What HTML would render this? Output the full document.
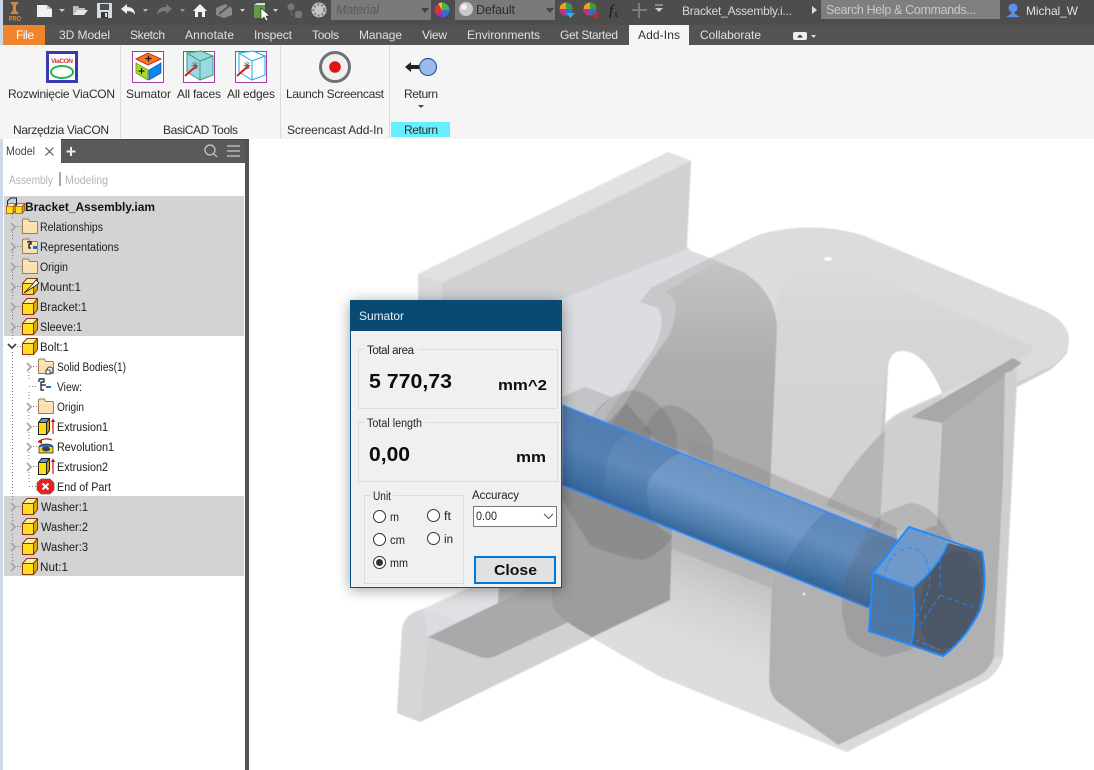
<!DOCTYPE html>
<html><head><meta charset="utf-8"><title>Sumator</title>
<style>html,body{margin:0;padding:0;background:#fff;overflow:hidden}svg{display:block}
text{font-family:"Liberation Sans",sans-serif;font-size:12px;white-space:pre}
.t{fill:#e0e0e0;font-size:12px}.r{fill:#2e2e2e;font-size:12px}.n{fill:#1c1c1c;font-size:11.5px}.d{fill:#222;font-size:11.5px}</style></head>
<body>
<svg xmlns="http://www.w3.org/2000/svg" width="1094" height="770" viewBox="0 0 1094 770">
<defs>
<linearGradient id="bolt" gradientUnits="userSpaceOnUse" x1="740" y1="477" x2="713" y2="546"><stop offset="0" stop-color="#6a93c3"/><stop offset=".42" stop-color="#739bc9"/><stop offset=".8" stop-color="#4d7cae"/><stop offset="1" stop-color="#376497"/></linearGradient>
<linearGradient id="wall" x1="0" y1="0" x2="0" y2="1"><stop offset="0" stop-color="#c3c4c6"/><stop offset=".45" stop-color="#adadaf"/><stop offset="1" stop-color="#a9a9ab"/></linearGradient>
<linearGradient id="cen" x1="0" y1="0" x2="0" y2="1"><stop offset="0" stop-color="#dcdcde"/><stop offset=".3" stop-color="#d5d5d7"/><stop offset="1" stop-color="#d2d2d4"/></linearGradient>
<linearGradient id="under" gradientUnits="userSpaceOnUse" x1="735" y1="560" x2="700" y2="650"><stop offset="0" stop-color="#bdbdbf"/><stop offset=".5" stop-color="#d2d2d4"/><stop offset="1" stop-color="#dddddd"/></linearGradient>
<filter id="sh" x="-20%" y="-20%" width="140%" height="140%"><feGaussianBlur stdDeviation="7"/></filter>
<filter id="soft" x="0" y="0" width="100%" height="100%"><feGaussianBlur stdDeviation=".5"/></filter>
<symbol id="cube" viewBox="0 0 16 17" width="16" height="17"><path d="M.5 5.500h11v11H.5z" fill="#ffdf20" stroke="#8a3510"/><path d="M.5 5.500L5 .5h10.500l-4 5z" fill="#ffeea0" stroke="#8a3510"/><path d="M11.500 5.500l4-5v11l-4 5z" fill="#e0a800" stroke="#8a3510"/></symbol>
<symbol id="folder" viewBox="0 0 16 17" width="16" height="17"><path d="M.5 3.500V2l1-1h5l1 2.500h7.500l.5 1v11H.5z" fill="#f8e0b0" stroke="#9a8058"/><path d="M1 5h14" stroke="#fff0d0"/></symbol>
<symbol id="chev" viewBox="0 0 6 10" width="6" height="10"><path d="M1 1l4 4-4 4" fill="none" stroke="#a5a5a5" stroke-width="1.800"/></symbol>
<symbol id="feat" viewBox="0 0 18 17" width="18" height="17"><path d="M.5 4.500h8v12h-8z" fill="#ffe010" stroke="#222"/><path d="M.5 4.500l3-4h8l-3 4z" fill="#5c9ad6" stroke="#222"/><path d="M8.500 4.500l3-4v12l-3 4z" fill="#c89800" stroke="#222"/><path d="M15 16V3" stroke="#d01010" stroke-width="1.200"/><path d="M12.800 4L15 .5 17.200 4z" fill="#d01010"/></symbol>
</defs>

<!-- window chrome -->
<rect width="1094" height="770" fill="#fff"/>
<rect y="0" width="3" height="770" fill="#ccd7ea"/>
<rect x="3" y="0" width="1091" height="25" fill="#4d4d4d"/>
<rect x="3" y="25" width="1091" height="20" fill="#535353"/>
<rect y="45" width="1094" height="94" fill="#f5f5f5"/>

<!-- quick access -->
<g>
<path d="M11 2h7v2l-2 1v6l2 1v2h-7v-2l2-1V5l-2-1z" fill="#d08a3c"/><text x="9" y="21" style="font-size:7px;font-weight:bold" fill="#d08a3c" textLength="12" lengthAdjust="spacingAndGlyphs">PRO</text>
<path d="M37 5h10l5 4v8H37z" fill="#eef0f4"/><path d="M47 5v4h5" fill="#b8bcc4"/><path d="M59 9h6l-3 3z" fill="#ccc"/>
<path d="M73 15V6h5l1 2h6v2h-8z" fill="#b9bec6"/><path d="M73 15l4-5h11l-4 5z" fill="#e4e7ec"/>
<rect x="97" y="3" width="15" height="15" fill="#d6dae2"/><rect x="100" y="4" width="9" height="6" fill="#4d5058"/><rect x="101" y="12" width="7" height="6" fill="#33353a"/><rect x="105" y="13" width="2" height="4" fill="#d6dae2"/>
<path d="M121 9l6-5v3q8 0 8 8-2-4-8-4v3z" fill="#f0f0f0"/><path d="M143 9h5l-2.500 3z" fill="#bbb"/>
<path d="M172 9l-6-5v3q-9 0-9 8 3-4 9-4v3z" fill="#7a7a7a"/><path d="M180 9h5l-2.500 3z" fill="#999"/>
<path d="M193 11l7-7 7 7h-2v6h-3v-5h-4v5h-3v-6z" fill="#f2f2f2"/>
<path d="M216 8l9-4 7 4v7l-8 3-8-3z" fill="#8a8a8a"/><path d="M219 14l10-8" stroke="#555" stroke-width="2"/><path d="M240 9h5l-2.500 3z" fill="#ccc"/>
<rect x="254" y="5" width="11" height="13" fill="#5f9a48"/><path d="M254 5l3-2h8v2z" fill="#d8e6d0"/><path d="M261 8v12l3-3 2 4 2-1-2-4h4z" fill="#fff" stroke="#222" stroke-width=".6"/><path d="M273 9h5l-2.500 3z" fill="#ccc"/>
<circle cx="291" cy="7" r="3.500" fill="#777"/><rect x="295" y="11" width="7" height="7" rx="2" fill="#777"/><path d="M291 11v4h3" stroke="#666" fill="none"/>
<circle cx="319" cy="10" r="7.500" fill="#c4c4c4"/><circle cx="319" cy="10" r="5.500" fill="none" stroke="#777" stroke-dasharray="2 2" stroke-width="2"/>
<rect x="331" y="0" width="100" height="20" fill="#7a7a7a"/><text x="336" y="14" fill="#5a5a5a" style="font-style:italic;font-size:12.500px" textLength="43">Material</text><path d="M421 8h8l-4 5z" fill="#444"/>
<circle cx="442" cy="10" r="8" fill="#f6c020"/><path d="M442 10V2a8 8 0 0 1 8 8z" fill="#50b048"/><path d="M442 10h8a8 8 0 0 1-6 7.700z" fill="#3070d0"/><path d="M442 10l2 7.700a8 8 0 0 1-8-2.500z" fill="#8838b0"/><path d="M442 10l-6 5.200a8 8 0 0 1-2-5.200 8 8 0 0 1 4-7z" fill="#e03030"/><circle cx="442" cy="10" r="8" fill="none" stroke="#29507c"/>
<rect x="455" y="0" width="100" height="20" fill="#7a7a7a"/><circle cx="466" cy="9" r="7" fill="#c8c8c8"/><circle cx="464" cy="7" r="3" fill="#f0f0f0"/><text x="476" y="14" fill="#2e2e2e" style="font-size:12.500px" textLength="39">Default</text><path d="M546 8h8l-4 5z" fill="#444"/>
<circle cx="566" cy="9" r="6.500" fill="#e8a020"/><path d="M566 9V2.500a6.500 6.500 0 0 1 6.500 6.500z" fill="#3c9a40"/><path d="M566 9h6.500a6.500 6.500 0 0 1-6.500 6.500z" fill="#3070d0"/><path d="M566 9v6.500a6.500 6.500 0 0 1-6.500-6.500z" fill="#c03090"/><path d="M566 13h9l-4.500 5z" fill="#30b0e8"/>
<circle cx="590" cy="9" r="6.500" fill="#e8a020"/><path d="M590 9V2.500a6.500 6.500 0 0 1 6.500 6.500z" fill="#3c9a40"/><path d="M590 9h6.500a6.500 6.500 0 0 1-6.500 6.500z" fill="#3070d0"/><path d="M590 9v6.500a6.500 6.500 0 0 1-6.500-6.500z" fill="#c03090"/><path d="M593 13l5 5m0-5l-5 5" stroke="#e02020" stroke-width="2"/>
<text x="609" y="15" fill="#151515" style="font-family:'Liberation Serif',serif;font-style:italic;font-size:15px">f</text><text x="614" y="17" fill="#151515" style="font-family:'Liberation Serif',serif;font-style:italic;font-size:9px">x</text>
<path d="M639 3v15M632 10h15" stroke="#7c7c7c" stroke-width="2"/>
<path d="M655 5h8" stroke="#ccc"/><path d="M655 8h8l-4 4z" fill="#ccc"/>
<text x="682" y="15" fill="#d8d8d8" textLength="110">Bracket_Assembly.i...</text>
<path d="M812 6l5 4-5 4z" fill="#ddd"/>
<rect x="821" y="0" width="179" height="19" fill="#7f7f7f"/><text x="826" y="14" fill="#c8c8c8" style="font-size:12.500px" textLength="150">Search Help &amp; Commands...</text>
<circle cx="1013" cy="8" r="4.500" fill="#5e90ea"/><path d="M1012 12h2l1 2 5 3v1h-14v-1l5-3z" fill="#5e90ea"/><path d="M1006 17.500h14" stroke="#2a56b0"/>
<text x="1026" y="15" fill="#e0e0e0" textLength="52">Michal_W</text>
</g>

<!-- ribbon tabs -->
<rect x="3" y="25" width="42" height="20" fill="#f0842a"/><text x="16" y="39" fill="#fff" textLength="18">File</text>
<rect x="629" y="25" width="60" height="21" fill="#f5f5f5"/>
<text class="t" x="59" y="39" textLength="51">3D Model</text><text class="t" x="130" y="39" textLength="35">Sketch</text><text class="t" x="185" y="39" textLength="49">Annotate</text><text class="t" x="254" y="39" textLength="38">Inspect</text><text class="t" x="312" y="39" textLength="27">Tools</text><text class="t" x="359" y="39" textLength="43">Manage</text><text class="t" x="422" y="39" textLength="25">View</text><text class="t" x="467" y="39" textLength="73">Environments</text><text class="t" x="560" y="39" textLength="58">Get Started</text><text x="638" y="39" fill="#333" textLength="42">Add-Ins</text><text class="t" x="700" y="39" textLength="61">Collaborate</text>
<rect x="793" y="32" width="14" height="8" rx="2" fill="#eee"/><path d="M797 37.500h6l-3-3z" fill="#333"/><path d="M811 35h5l-2.500 3z" fill="#ddd"/>

<!-- ribbon panels -->
<path d="M120.500 46v92M280.500 46v92M389.500 46v92" stroke="#d9d9d9"/>
<rect x="47.500" y="52.500" width="29" height="29" fill="#fff" stroke="#3a3ab0" stroke-width="3"/><text x="51" y="63" fill="#d03040" style="font-size:6.500px;font-weight:bold" textLength="22">ViaCON</text><ellipse cx="62" cy="72" rx="11" ry="6" fill="#fff" stroke="#22b84a" stroke-width="2"/>
<rect x="132.500" y="51.500" width="31" height="31" fill="#fff" stroke="#a040a8"/>
<path d="M136 59l12-6 13 6-13 6z" fill="#f07820" stroke="#e02020"/><path d="M136 63l12 7v10l-12-7z" fill="#a8dc20" stroke="#408820" stroke-width=".7"/><path d="M149 70l12-7v10l-12 7z" fill="#0a88e8" stroke="#2040c0" stroke-width=".7"/><path d="M148.500 55.500v6M145.500 58.500h6M141.500 68v6M138.500 71h6" stroke="#111" stroke-width="1.200"/>
<rect x="183.500" y="51.500" width="31" height="31" fill="#fff" stroke="#a040a8"/>
<path d="M187 53l13 8v19l-13-8z" fill="#9cd8e4" stroke="#2aa868"/><path d="M187 53l14-2 12 5-13 5z" fill="#9cd8e4" stroke="#2aa868"/><path d="M200 61l13-5v19l-13 5z" fill="#9cd8e4" stroke="#2aa868"/>
<path d="M185 76l10-9" stroke="#e01818" stroke-width="2"/><path d="M193 65l5 0-2 4z" fill="#e01818"/><path d="M192.500 62.500l5 6m0-6l-5 6m-1-3h7m-3.500-4v8" stroke="#666" stroke-width=".7"/>
<rect x="235.500" y="51.500" width="31" height="31" fill="#fff" stroke="#a040a8"/>
<path d="M239 53l13 8v19l-13-8zM239 53l14-2 12 5-13 5zM252 61l13-5v19l-13 5z" fill="#fff" stroke="#18a8e8"/>
<path d="M237 76l10-9" stroke="#e01818" stroke-width="2"/><path d="M245 65l5 0-2 4z" fill="#e01818"/><path d="M244.500 62.500l5 6m0-6l-5 6m-1-3h7m-3.500-4v8" stroke="#666" stroke-width=".7"/>
<circle cx="335" cy="67" r="14.500" fill="#f0f0f0" stroke="#707070" stroke-width="3"/><circle cx="335" cy="67" r="5.800" fill="#e01414"/>
<path d="M405 67l6-5v3h9v4h-9v3z" fill="#222"/><circle cx="428" cy="67" r="8.500" fill="#9abce6" stroke="#2a5aa8" stroke-width="1.200"/>
<text class="r" x="8" y="98" textLength="107">Rozwinięcie ViaCON</text><text class="r" x="126" y="98" textLength="45">Sumator</text><text class="r" x="177" y="98" textLength="44">All faces</text><text class="r" x="227" y="98" textLength="48">All edges</text><text class="r" x="286" y="98" textLength="98">Launch Screencast</text><text class="r" x="404" y="98" textLength="34">Return</text>
<path d="M418 105h6l-3 3z" fill="#444"/>
<rect x="391" y="122" width="59" height="15" fill="#66efff"/>
<text class="r" x="13" y="134" textLength="96">Narzędzia ViaCON</text><text class="r" x="163" y="134" textLength="75">BasiCAD Tools</text><text class="r" x="287" y="134" textLength="96">Screencast Add-In</text><text class="r" x="404" y="134" textLength="34">Return</text>

<!-- browser panel -->
<rect x="3" y="139" width="242" height="631" fill="#fff"/>
<rect x="61" y="140" width="184" height="23" fill="#5a5a5a"/>
<rect x="245" y="139" width="4" height="631" fill="#535353"/>
<rect x="61" y="139" width="188" height="1" fill="#4a4a4a"/>
<text x="6" y="155" fill="#444" textLength="29" lengthAdjust="spacingAndGlyphs">Model</text><path d="M45.500 147.500l8 8m0-8l-8 8" stroke="#555" stroke-width="1.100"/>
<path d="M71 147v9M66.500 151.500h9" stroke="#eee" stroke-width="2"/>
<circle cx="210" cy="150" r="5" fill="none" stroke="#ccc" stroke-width="1.200"/><path d="M214 154l3 3" stroke="#ccc" stroke-width="1.200"/>
<path d="M227 146h13M227 151h13M227 156h13" stroke="#ccc" stroke-width="1.200"/>
<text x="9" y="184" fill="#b4b4b4" textLength="44" lengthAdjust="spacingAndGlyphs">Assembly</text><rect x="59" y="172" width="2" height="14" fill="#a8a8a8"/><text x="65" y="184" fill="#b4b4b4" textLength="43" lengthAdjust="spacingAndGlyphs">Modeling</text>
<rect x="4" y="196" width="240" height="140" fill="#d3d3d3"/>
<rect x="4" y="496" width="240" height="80" fill="#d3d3d3"/>
<!-- tree lines -->
<path d="M12.500 214v6m0 12v8m0 12v8m0 12v8m0 12v8m0 12v8m0 12v8m0 12v150m0 12v8m0 12v8m0 12v8M29 356v2m0 14v8m0 12v8m0 12v8m0 12v8m0 12v8m0 12v12" stroke="#777" stroke-dasharray="1 2" fill="none"/>
<path d="M17 226.500h5M17 246.500h5M17 266.500h5M17 286.500h5M17 306.500h5M17 326.500h5M17 346.500h5M17 506.500h5M17 526.500h5M17 546.500h5M17 566.500h5M33 366.500h5M29 386.500h9M33 406.500h5M33 426.500h5M33 446.500h5M33 466.500h5M29 486.500h9" stroke="#777" stroke-dasharray="1 2"/>
<!-- root icon -->
<path d="M7.500 207v-6l3-3h6v8" fill="#bcd0e8" stroke="#223"/><use href="#cube" x="6" y="203" width="10" height="11"/><use href="#cube" x="15" y="203" width="10" height="11"/>
<use href="#chev" x="10" y="222"/><use href="#chev" x="10" y="242"/><use href="#chev" x="10" y="262"/><use href="#chev" x="10" y="282"/><use href="#chev" x="10" y="302"/><use href="#chev" x="10" y="322"/>
<path d="M8 344l4 4 4-4" fill="none" stroke="#444" stroke-width="1.800"/>
<use href="#chev" x="10" y="502"/><use href="#chev" x="10" y="522"/><use href="#chev" x="10" y="542"/><use href="#chev" x="10" y="562"/>
<use href="#chev" x="26" y="362"/><use href="#chev" x="26" y="402"/><use href="#chev" x="26" y="422"/><use href="#chev" x="26" y="442"/><use href="#chev" x="26" y="462"/>
<use href="#folder" x="22" y="218"/><use href="#folder" x="22" y="238"/><use href="#folder" x="22" y="258"/>
<path d="M27 242h4v2h-2v4h2m2 0h4m-8-6h2" fill="none" stroke="#111" stroke-width="1.300"/><rect x="33" y="246" width="4" height="3" fill="#2a68b8"/>
<use href="#cube" x="22" y="278"/><path d="M24 293l9-9 3-4 3 3-4 3z" fill="#fff" stroke="#222" stroke-width=".8"/>
<use href="#cube" x="22" y="298"/><use href="#cube" x="22" y="318"/><use href="#cube" x="22" y="338"/>
<use href="#cube" x="22" y="498"/><use href="#cube" x="22" y="518"/><use href="#cube" x="22" y="538"/><use href="#cube" x="22" y="558"/>
<use href="#folder" x="38" y="358"/><circle cx="50" cy="370" r="3" fill="#fff" stroke="#444"/><rect x="46" y="370" width="4" height="4" fill="#fff" stroke="#444"/>
<path d="M39 379h5v3h-3v8h3M41 385h5M39 379v3" fill="none" stroke="#111" stroke-width="1.200"/><rect x="39" y="378" width="5" height="2" fill="#2a68b8"/><rect x="46" y="386" width="5" height="2" fill="#2a68b8"/>
<use href="#folder" x="38" y="398"/>
<use href="#feat" x="38" y="418"/><use href="#feat" x="38" y="458"/>
<path d="M38 442q6-5 14-2" fill="none" stroke="#d01010" stroke-width="1.200"/><path d="M38 442l4-2v4z" fill="#d01010"/><ellipse cx="46" cy="447" rx="7" ry="3" fill="#3a70b0" stroke="#222" stroke-width=".7"/><path d="M39 447v6h14v-6" fill="#f0d020" stroke="#222" stroke-width=".7"/><ellipse cx="46" cy="449" rx="4" ry="2.500" fill="#345"/>
<path d="M41 479h9l4 4v7l-4 4h-9l-4-4v-7z" fill="#e82020" stroke="#666" stroke-width=".8"/><path d="M42.500 483.500l6 6m0-6l-6 6" stroke="#fff" stroke-width="2"/>
<text x="25" y="211" fill="#111" style="font-weight:bold;font-size:11.500px" textLength="130" lengthAdjust="spacingAndGlyphs">Bracket_Assembly.iam</text>
<g>
<text class="n" x="40" y="231" textLength="63" lengthAdjust="spacingAndGlyphs">Relationships</text><text class="n" x="40" y="251" textLength="79" lengthAdjust="spacingAndGlyphs">Representations</text><text class="n" x="40" y="271" textLength="28" lengthAdjust="spacingAndGlyphs">Origin</text><text class="n" x="40" y="291" textLength="41" lengthAdjust="spacingAndGlyphs">Mount:1</text><text class="n" x="40" y="311" textLength="47" lengthAdjust="spacingAndGlyphs">Bracket:1</text><text class="n" x="40" y="331" textLength="42" lengthAdjust="spacingAndGlyphs">Sleeve:1</text><text class="n" x="40" y="351" textLength="29" lengthAdjust="spacingAndGlyphs">Bolt:1</text>
<text class="n" x="57" y="371" textLength="69" lengthAdjust="spacingAndGlyphs">Solid Bodies(1)</text><text class="n" x="57" y="391" textLength="25" lengthAdjust="spacingAndGlyphs">View:</text><text class="n" x="57" y="411" textLength="27" lengthAdjust="spacingAndGlyphs">Origin</text><text class="n" x="57" y="431" textLength="51" lengthAdjust="spacingAndGlyphs">Extrusion1</text><text class="n" x="57" y="451" textLength="57" lengthAdjust="spacingAndGlyphs">Revolution1</text><text class="n" x="57" y="471" textLength="51" lengthAdjust="spacingAndGlyphs">Extrusion2</text><text class="n" x="57" y="491" textLength="54" lengthAdjust="spacingAndGlyphs">End of Part</text>
<text class="n" x="41" y="511" textLength="47" lengthAdjust="spacingAndGlyphs">Washer:1</text><text class="n" x="41" y="531" textLength="47" lengthAdjust="spacingAndGlyphs">Washer:2</text><text class="n" x="41" y="551" textLength="47" lengthAdjust="spacingAndGlyphs">Washer:3</text><text class="n" x="40" y="571" textLength="28" lengthAdjust="spacingAndGlyphs">Nut:1</text>
</g>

<!-- 3D scene -->
<g filter="url(#soft)">
<path d="M418 274L668 152L691 161L687 243Q687 250 694 252L710 258L758 235Q810 220 862 235L1036 307Q1069 320 1069 340Q1069 355 1050 367L1017 385L1012 480L1003 657Q1000 670 987 680L847 752L661 677Q630 660 593 638L420 722L397 713L402 630Q404 613 423 609L473 588L418 560Z" fill="#dadadc"/>
<path d="M418 274L668 152L691 161L442 283Z" fill="#e0e1e3"/>
<path d="M442 283L691 161L687 243L684 250L567 297L442 360Z" fill="#d0d1d3"/>
<path d="M442 360L567 297L684 250L694 252L710 258L651 288L640 302L658 308Q668 320 651 353L602 413L562 420L442 500Z" fill="#dcdde0"/>
<path d="M710 258L758 235Q810 220 862 235L1036 307Q1069 320 1069 340Q1069 355 1050 367L1015 385L942 423L885 430L777 330L743 272Z" fill="#dcdcde"/>
<path d="M777 300Q790 262 820 258L880 278L1030 345Q1040 352 1015 360L942 393L902 351L885 423L880 530L770 487Z" fill="url(#cen)"/>
<path d="M1050 367Q1069 355 1069 340L1067 353Q1060 362 1050 370L1017 387L1017 382Z" fill="#cdcdcf"/>
<path d="M640 302L651 288L710 258L743 272Q775 292 777 327L770 490L600 425L651 353Q668 325 658 308Z" fill="#c8c8ca"/>
<path d="M665 292L716 262L743 272Q775 292 777 327L770 490L610 428L647 367L668 337Q678 318 675 300Z" fill="url(#wall)"/>
<path d="M888 367Q890 351 902 351Q925 351 942 393L904 410Q892 416 885 423Z" fill="#fff"/>
<path d="M888 367L885 423L880 520L874 520L881 425Z" fill="#cacacc"/>
<path d="M885 425Q895 416 904 412L942 395L937 530L880 530Z" fill="#cfcfd1"/>
<path d="M885 430L880 528L826 505Q850 465 885 430Z" fill="#b6b6b8"/>
<path d="M942 423L1005 373L1003 480L994 657Q990 670 977 677L838 745L779 703Q769 695 769 680L772 570L869 608L897 540L937 525Z" fill="#b1b1b3"/>
<path d="M911 417L1013 358L1022 363L942 423Z" fill="#a8a8aa"/>
<path d="M1005 373L1017 370L1012 480L1003 657L994 657L1003 480Z" fill="#cfcfd1"/>
<path d="M670 530L772 570L769 680Q769 695 779 703L838 745L847 752L661 677Q630 660 593 638L670 600Z" fill="url(#under)"/>
<path d="M670 527L772 568L771 588L670 548Z" fill="#a8a8aa" fill-opacity=".55"/>
<path d="M397 713L420 722L592 637L670 600L670 575L500 654L480 657L428 637L402 630Z" fill="#d0d1d3"/>
<path d="M397 713L402 630Q404 613 423 609L428 637L420 722Z" fill="#d6d6d8"/>
<path d="M423 609L473 586L560 586L560 578L428 637Z" fill="#dcdde0"/>
<path d="M423 609L473 586L499 590L497 622Q490 632 480 628Z" fill="#dfe0e3"/>
<path d="M499 586L530 586L530 601L497 617Z" fill="#b3b3b5"/>
<path d="M428 637L500 602L530 588L562 575L670 530L670 575L500 654Q490 660 480 657Z" fill="#a9a9ab"/>
<path d="M550 580L562 480L672 530L670 600L592 637Q560 620 553 607Z" fill="#9d9d9f"/>
<path d="M562 500L590 545Q620 558 644 560Q665 550 672 537L640 512L562 485Z" fill="#808082" fill-opacity=".6"/>
<path d="M562 397L585 387L612 397L592 417L562 410Z" fill="#c2c3c5"/>
<path d="M592 417Q605 395 632 390Q660 395 677 433L677 452L640 438Z" fill="#6e6e70" fill-opacity=".3"/>
<path d="M644 430Q655 408 668 405Q690 405 713 440L713 463L660 442Z" fill="#6c6c6e" fill-opacity=".3"/>
<path d="M607 423L626 403L652 433L648 442Z" fill="#6a6a6c" fill-opacity=".35"/>
<path d="M689 438L897 527L897 542L689 458Z" fill="#8e8e90" fill-opacity=".42"/>
<path d="M562 405L897 540L869 608L562 485Z" fill="url(#bolt)"/>
<path d="M562 405L680 453Q640 475 648 500L650 519L562 485Z" fill="#2f5f94" fill-opacity=".28"/>
<path d="M562 405L628 432Q600 450 605 502L562 485Z" fill="#2f5f94" fill-opacity=".18"/>
<path d="M826 511L897 540L869 608L782 574Q795 540 826 511Z" fill="#2e5e92" fill-opacity=".22"/>
<path d="M873 536L897 540L869 608L842 597Q845 565 873 536Z" fill="#2e5e92" fill-opacity=".15"/>
<path d="M562 405L897 540M562 485L869 608" stroke="#1e8cff" stroke-width="1.600" fill="none"/>
<path d="M842 613Q840 560 883 513L909 503Q935 503 954 543L960 560L911 650L885 657Q860 650 847 637Z" fill="#6d6d6f" fill-opacity=".25"/>
</g>
<g>
<path d="M948 543L982 552Q988 585 980 610Q965 640 943 656L911 645Q917 620 913 588Q935 570 948 543Z" fill="#535f70"/>
<ellipse cx="950" cy="600" rx="29" ry="50" transform="rotate(14 950 600)" fill="#4c5868"/>
<path d="M909 527L948 543Q938 568 913 588L873 573Z" fill="#6f99c9"/>
<path d="M873 573L913 588Q917 620 911 645L869 631Z" fill="#4d76a3"/>
<g fill="none" stroke="#1e8cff">
<path d="M909 527L982 552Q988 585 980 610Q965 640 943 656L911 645L869 631L873 573Z" stroke-width="2" stroke-linejoin="round"/>
<path d="M873 573L913 588Q938 568 948 543M913 588Q917 620 911 645" stroke-width="1.600"/>
<g stroke-width=".9" stroke-dasharray="5 3"><path d="M886 570Q890 550 912 548Q932 552 929 590L918 615Q900 625 885 615Q880 595 886 570Z"/><path d="M940 558V590M940 595L920 625M940 595L972 607M869 615L885 618M915 640L940 650"/></g>
</g>
<ellipse cx="828" cy="259" rx="4" ry="2" fill="#fff" fill-opacity=".9"/>
<circle cx="804" cy="594" r="1.500" fill="#e8e8e8"/>
</g>

<!-- dialog -->
<rect x="350" y="302" width="212" height="288" fill="#000" opacity=".38" filter="url(#sh)"/>
<rect x="350.500" y="300.500" width="211" height="287" fill="#f0f0f0" stroke="#0a5382"/>
<rect x="350" y="300" width="212" height="31" fill="#084a72"/>
<text x="359" y="320" fill="#eaf0f5" textLength="45">Sumator</text>
<g fill="none" stroke="#dcdcdc">
<path d="M364 349.500H358.500V408.500H557.500V349.500H418"/><path d="M364 422.500H358.500V481.500H557.500V422.500H425"/><path d="M370 495.500H364.500V583.500H463.500V495.500H393"/>
</g>
<text class="d" x="367" y="354" textLength="47">Total area</text><text class="d" x="367" y="427" textLength="55" lengthAdjust="spacingAndGlyphs">Total length</text><text class="d" x="373" y="500" textLength="18" lengthAdjust="spacingAndGlyphs">Unit</text><text class="d" x="472" y="499" textLength="47">Accuracy</text>
<text x="369" y="388" fill="#0c0c0c" style="font-size:20px;font-weight:bold" textLength="83" lengthAdjust="spacingAndGlyphs">5 770,73</text><text x="498" y="390" fill="#0c0c0c" style="font-size:15px;font-weight:bold" textLength="49" lengthAdjust="spacingAndGlyphs">mm^2</text>
<text x="369" y="461" fill="#0c0c0c" style="font-size:20px;font-weight:bold" textLength="41" lengthAdjust="spacingAndGlyphs">0,00</text><text x="516" y="462" fill="#0c0c0c" style="font-size:15px;font-weight:bold" textLength="30" lengthAdjust="spacingAndGlyphs">mm</text>
<g fill="#fff" stroke="#333"><circle cx="379.500" cy="516.500" r="6"/><circle cx="433.500" cy="515.500" r="6"/><circle cx="379.500" cy="539.500" r="6"/><circle cx="433.500" cy="538.500" r="6"/><circle cx="379.500" cy="562.500" r="6"/></g>
<circle cx="379.500" cy="562.500" r="3.500" fill="#333"/>
<text class="d" x="390" y="521" textLength="9" lengthAdjust="spacingAndGlyphs">m</text><text class="d" x="444" y="520" textLength="7" lengthAdjust="spacingAndGlyphs">ft</text><text class="d" x="390" y="544" textLength="15" lengthAdjust="spacingAndGlyphs">cm</text><text class="d" x="444" y="543" textLength="9" lengthAdjust="spacingAndGlyphs">in</text><text class="d" x="390" y="567" textLength="18" lengthAdjust="spacingAndGlyphs">mm</text>
<rect x="473.500" y="506.500" width="83" height="20" fill="#fff" stroke="#7a7a7a"/><text class="d" x="476" y="520" textLength="21" lengthAdjust="spacingAndGlyphs">0.00</text><path d="M544 514l4.500 4.500 4.500-4.500" fill="none" stroke="#555"/>
<rect x="475" y="557" width="80" height="26" fill="#e1e1e1" stroke="#0078d7" stroke-width="2"/><text x="494" y="575" fill="#111" style="font-size:15px;font-weight:bold" textLength="43" lengthAdjust="spacingAndGlyphs">Close</text>
</svg>
</body></html>
